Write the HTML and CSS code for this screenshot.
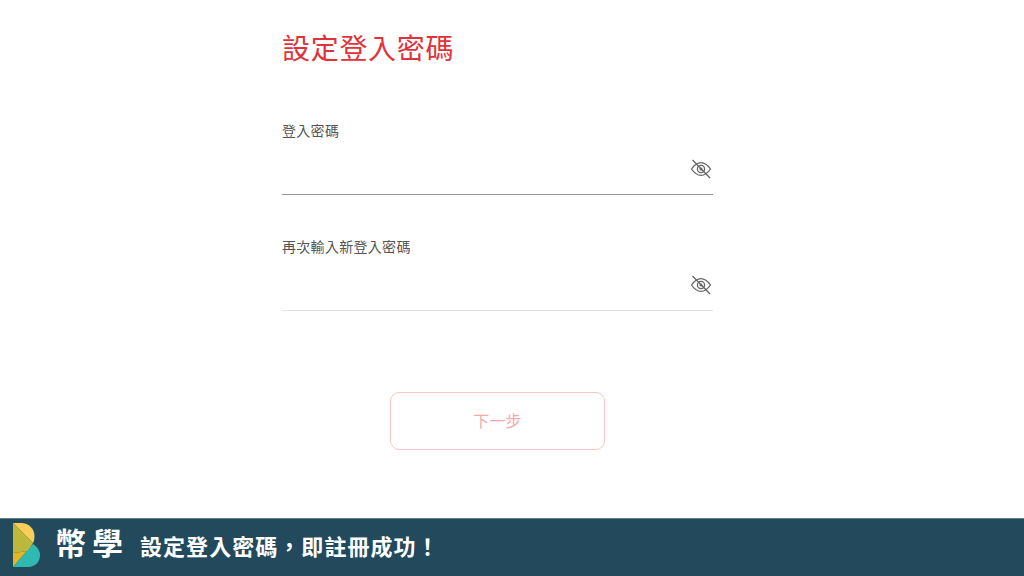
FILE: index.html
```html
<!DOCTYPE html>
<html lang="zh-Hant">

<head>
  <meta charset="UTF-8" />
  <meta name="viewport" content="width=device-width, initial-scale=1.0" />
  <title>設定登入密碼</title>
  <link rel="stylesheet" href="styles.css">
</head>

<body>
  <main class="form-wrap">
    <h1>設定登入密碼</h1>

    <div class="field active">
      <label for="password">登入密碼</label>
      <div class="input-row">
        <input type="password" id="password" />
        <svg class="eye" viewBox="0 0 22 20" width="22" height="20" fill="none" stroke="#666" stroke-width="1.3">
          <path d="M1.500 10C4.500 5.600 7.600 3.600 11 3.600S17.500 5.600 20.500 10c-3 4.400-6.100 6.400-9.500 6.400S4.500 14.400 1.500 10Z" />
          <circle cx="11" cy="10" r="3.600" />
          <circle cx="11" cy="10" r="1.500" fill="#666" stroke="none" />
          <path d="M2.500 1 20 19" />
        </svg>
      </div>
    </div>

    <div class="field">
      <label for="password2">再次輸入新登入密碼</label>
      <div class="input-row">
        <input type="password" id="password2" />
        <svg class="eye" viewBox="0 0 22 20" width="22" height="20" fill="none" stroke="#666" stroke-width="1.3">
          <path d="M1.500 10C4.500 5.600 7.600 3.600 11 3.600S17.500 5.600 20.500 10c-3 4.400-6.100 6.400-9.500 6.400S4.500 14.400 1.500 10Z" />
          <circle cx="11" cy="10" r="3.600" />
          <circle cx="11" cy="10" r="1.500" fill="#666" stroke="none" />
          <path d="M2.500 1 20 19" />
        </svg>
      </div>
    </div>

    <button id="nextButton" disabled>下一步</button>
  </main>

  <footer class="banner">
    <svg class="logo" viewBox="0 0 27 44" width="27" height="44">
      <path d="M0 0H8C16 0 21.500 6 21.500 13C21.500 15.500 21 18 20 20L0 0Z" fill="#f7cf57" />
      <path d="M0 0 20 20 15 28 0 30Z" fill="#bdb73c" />
      <path d="M0 44V30L15 28 20 21Z" fill="#e3b71f" />
      <path d="M0 44 20 21C24 23.500 27 27.500 27 32C27 39 22 44 15 44Z" fill="#2fb9b0" />
    </svg>
    <span class="brand">幣學</span>
    <span class="slogan">設定登入密碼，即註冊成功！</span>
  </footer>
</body>

</html>
```

FILE: styles.css
```css
* {
  box-sizing: border-box;
}

body {
  margin: 0;
  height: 576px;
  background: #fff;
  font-family: "Noto Sans CJK TC", "Noto Sans", sans-serif;
  display: flex;
  flex-direction: column;
  overflow: hidden;
}

.form-wrap {
  flex: 1;
  width: 431px;
  margin-left: 282px;
  padding-top: 27px;
  display: flex;
  flex-direction: column;
}

h1 {
  margin: 0 0 52px;
  font-size: 28px;
  line-height: 41px;
  font-weight: 400;
  letter-spacing: 0.7px;
  color: #e0323a;
}

.field {
  margin-bottom: 41px;
  border-bottom: 1px solid #e3e3e3;
  height: 75px;
}

.field.active {
  border-bottom-color: #999;
}

label {
  display: block;
  font-size: 14px;
  line-height: 20px;
  letter-spacing: 0.3px;
  color: #555;
}

.input-row {
  display: flex;
  align-items: center;
  padding-top: 19px;
}

input {
  flex: 1;
  min-width: 0;
  height: 20px;
  border: none;
  outline: none;
}

.eye {
  margin-right: 1px;
}

button {
  width: 215px;
  height: 58px;
  margin: 40px auto 0;
  padding-bottom: 3px;
  border: 1px solid #f9c6c8;
  border-radius: 9px;
  background: #fff;
  color: #f5a9ac;
  font-family: inherit;
  font-size: 16px;
  letter-spacing: 0.2px;
}

.banner {
  height: 58px;
  background: #224a5c;
  border-top: 1px solid #5d7d8a;
  display: flex;
  align-items: center;
  padding: 0 0 6px 13px;
  color: #fff;
  font-weight: 700;
}

.logo {
  flex: none;
  margin-right: 15px;
}

.brand {
  font-size: 31px;
  letter-spacing: 6px;
  padding-bottom: 6px;
  margin-right: 11px;
}

.slogan {
  font-size: 22px;
  letter-spacing: 1.05px;
}
```
